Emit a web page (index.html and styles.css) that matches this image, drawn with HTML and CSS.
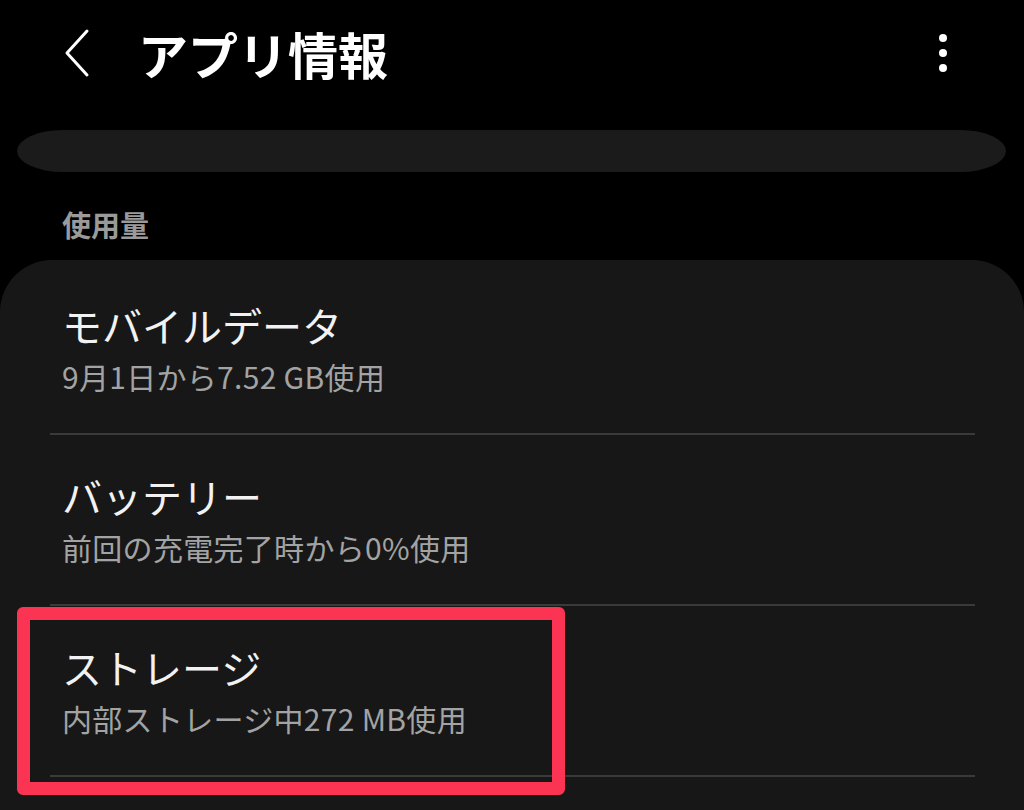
FILE: index.html
```html
<!DOCTYPE html>
<html lang="ja">
<head>
  <meta charset="UTF-8" />
  <title>アプリ情報</title>
  <link rel="stylesheet" href="styles.css">
</head>
<body>
  <div class="header">
    <svg class="back" width="30" height="50" viewBox="0 0 30 50">
      <polyline points="24,3 4,25 24,47" fill="none" stroke="#fff" stroke-width="3" stroke-linecap="round" stroke-linejoin="round"/>
    </svg>
    <h1 class="title">アプリ情報</h1>
    <svg class="menu" width="12" height="44" viewBox="0 0 12 44">
      <circle cx="6" cy="7" r="4" fill="#fff"/>
      <circle cx="6" cy="22" r="4" fill="#fff"/>
      <circle cx="6" cy="37" r="4" fill="#fff"/>
    </svg>
  </div>

  <div class="peek"></div>

  <div class="section-label">使用量</div>

  <div class="card">
    <div class="row first">
      <div class="row-title">モバイルデータ</div>
      <div class="row-sub">9月1日から7.52 GB使用</div>
    </div>
    <div class="row">
      <div class="row-title">バッテリー</div>
      <div class="row-sub">前回の充電完了時から0%使用</div>
    </div>
    <div class="row marked">
      <div class="row-title">ストレージ</div>
      <div class="row-sub">内部ストレージ中272 MB使用</div>
      <div class="highlight"></div>
    </div>
  </div>
</body>
</html>
```

FILE: styles.css
```css
html, body {
  margin: 0;
  background: #000;
}
body {
  width: 1024px;
  height: 810px;
  overflow: hidden;
  font-family: "Noto Sans CJK JP", "Noto Sans", sans-serif;
  color: #f2f2f2;
}
.header {
  display: flex;
  align-items: center;
  height: 105px;
}
.back {
  margin-left: 63px;
}
.title {
  margin: 0 0 0 45px;
  font-size: 50px;
  font-weight: 700;
  line-height: 60px;
  color: #fff;
}
.menu {
  margin-left: auto;
  margin-right: 75px;
}
.peek {
  height: 42px;
  margin: 25px 18px 0 17px;
  background: #1b1b1b;
  border-radius: 46px / 21px;
}
.section-label {
  margin: 34px 0 18px 62px;
  font-size: 29px;
  font-weight: 700;
  line-height: 36px;
  color: #9a9a9a;
}
.card {
  background: #171717;
  border-radius: 52px 52px 0 0;
  height: 560px;
  padding-top: 1px;
}
.row {
  position: relative;
  display: flex;
  flex-direction: column;
  gap: 9px;
  margin: 0 49px 0 50px;
  padding: 37px 0 39px 12px;
  border-bottom: 2px solid #3a3a3a;
}
.row.first {
  padding-top: 40px;
}
.row-title {
  font-size: 40px;
  line-height: 48px;
  color: #f2f2f2;
}
.row-sub {
  font-size: 30px;
  line-height: 36px;
  letter-spacing: 0.3px;
  color: #a3a3a3;
}
.highlight {
  position: absolute;
  left: -33px;
  top: 1px;
  width: 522px;
  height: 162px;
  border: 13px solid #fb3453;
  border-radius: 6px;
}
```
